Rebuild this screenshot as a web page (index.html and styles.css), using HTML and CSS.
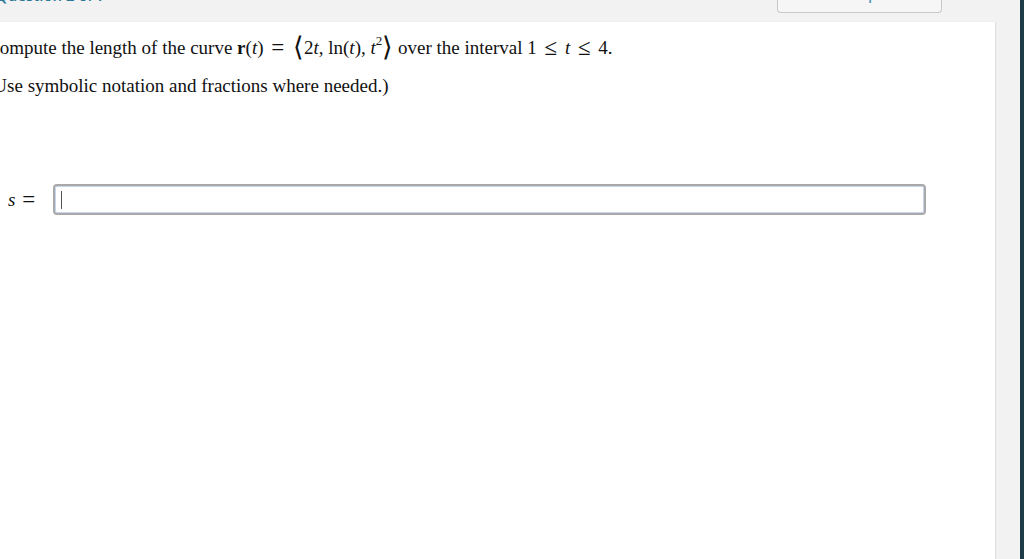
FILE: index.html
```html
<!DOCTYPE html>
<html lang="en">
<head>
  <meta charset="UTF-8">
  <title>Question 2 of 7</title>
  <link rel="stylesheet" href="styles.css">
</head>
<body>

  <div class="layout">
    <div class="workspace">
      <div class="top-bar">
        <span class="question-title">Question 2 of 7 &nbsp;&gt;</span>
        <div class="attempt-box"><span class="attempt-label">Attempt 2</span></div>
      </div>

      <div class="panel">
        <p class="prompt">
          Compute the length of the curve <b>r</b>(<i>t</i>) <span class="op">=</span>
          <span class="vec"><span class="angle">&#10216;</span>2<i>t</i>, ln(<i>t</i>), <i>t</i><sup>2</sup><span class="angle">&#10217;</span></span>
          over the interval 1 <span class="op">&le;</span> <i>t</i> <span class="op">&le;</span> 4.
        </p>
        <p class="prompt hint">(Use symbolic notation and fractions where needed.)</p>

        <!-- answer row -->
        <div class="answer-row">
          <span class="answer-label"><i>s</i> <span class="op">=</span></span>
          <div class="answer-box"><span class="caret"></span></div>
        </div>
      </div>
    </div>
    <div class="desktop-edge"></div>
  </div>

</body>
</html>
```

FILE: styles.css
```css
body {
  margin: 0;
  background: #f2f2f2;
  height: 100vh;
  overflow: hidden;
  font-family: 'Liberation Serif', 'Times New Roman', serif;
  color: #111;
}

.layout {
  display: flex;
  height: 100vh;
}

.workspace {
  flex: 1;
  display: flex;
  flex-direction: column;
}

.top-bar {
  height: 22px;
  display: flex;
  justify-content: space-between;
  padding-right: 54px;
  box-sizing: border-box;
}

.question-title {
  font-family: 'Open Sans', 'Liberation Sans', sans-serif;
  font-size: 15px;
  font-weight: 600;
  color: #2a7898;
  margin-left: -4px;
  margin-top: -15px;
  line-height: 20px;
  height: 20px;
}

.attempt-box {
  width: 163px;
  height: 12px;
  border: 1px solid #c8c8c8;
  border-top: none;
  border-radius: 0 0 4px 4px;
  background: #f6f6f6;
  overflow: hidden;
  text-align: center;
}

.attempt-label {
  display: block;
  font-family: 'Open Sans', 'Liberation Sans', sans-serif;
  font-size: 15px;
  font-weight: 600;
  color: #5b9cc0;
  line-height: 20px;
  margin-top: -16px;
}

.panel {
  flex: 1;
  width: 995px;
  background: #fff;
  box-shadow: 1px 0 1px rgba(0, 0, 0, 0.08);
  padding-top: 13px;
  box-sizing: border-box;
}

.prompt {
  margin: 0 0 0 -13px;
  font-size: 19px;
  line-height: 26px;
  white-space: nowrap;
}

.prompt.hint {
  margin-top: 12px;
}

/* relations (=, ≤) are drawn a bit larger, as a math renderer does */
.op {
  font-size: 23px;
  line-height: 0;
  padding: 0 3px;
  vertical-align: -1px;
}

.answer-label .op {
  padding: 0 2px;
}

.vec {
  padding-left: 1px;
}

.angle {
  font-size: 27px;
  line-height: 19px;
  vertical-align: -2px;
}

sup {
  font-size: 13px;
  line-height: 0;
  vertical-align: 9px;
}

.answer-row {
  display: flex;
  align-items: center;
  margin-top: 87px;
  padding-left: 8px;
}

.answer-label {
  font-size: 19px;
  width: 47px;
}

.answer-box {
  width: 869px;
  height: 27px;
  box-sizing: border-box;
  border: 1px solid #c5d6ee;
  outline: 2px solid #a9a9a9;
  border-radius: 2px;
  background: #fff;
  display: flex;
  align-items: center;
  padding-left: 5px;
}

.caret {
  width: 1px;
  height: 18px;
  background: #555;
}

.desktop-edge {
  width: 4px;
  margin-left: 24px;
  background: #1f3b48;
}
```
